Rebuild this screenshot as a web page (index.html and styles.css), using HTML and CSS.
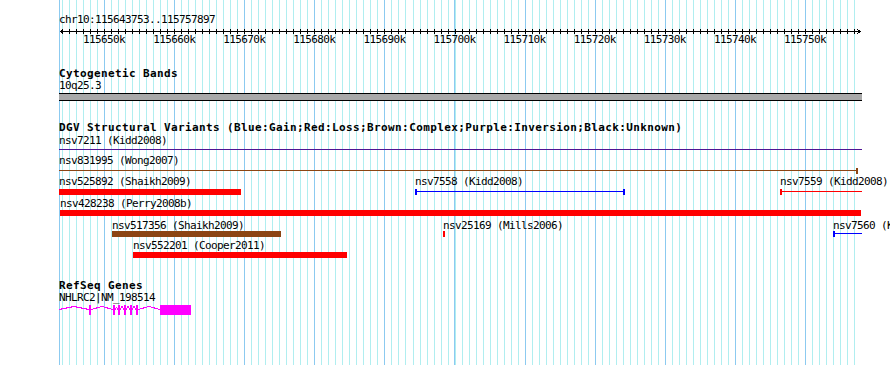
FILE: index.html
```html
<!DOCTYPE html>
<html lang="en">
<head>
    <meta charset="UTF-8">
    <title>chr10:115643753..115757897</title>
    <link rel="stylesheet" href="styles.css">
</head>
<body>
    <div class="page">
        <div class="gutter"></div>

        <div class="panel">
            <!-- ruler -->
            <div class="ruler">
                <div class="txt">chr10:115643753..115757897</div>
                <svg class="axis" width="803" height="8">
                    <line x1="1" y1="5.5" x2="801" y2="5.5" />
                    <path d="M4.5 3.5 L1.5 5.5 L4.5 7.5" />
                    <path d="M798.5 3.5 L801.5 5.5 L798.5 7.5" />
                </svg>
                <div class="ticks">
                    <span>115650k</span><span>115660k</span><span>115670k</span><span>115680k</span>
                    <span>115690k</span><span>115700k</span><span>115710k</span><span>115720k</span>
                    <span>115730k</span><span>115740k</span><span>115750k</span>
                </div>
            </div>

            <!-- cytoband -->
            <div class="track cyto">
                <div class="title">Cytogenetic Bands</div>
                <div class="txt">10q25.3</div>
                <div class="band"></div>
            </div>

            <!-- DGV -->
            <div class="track dgv">
                <div class="title">DGV Structural Variants (Blue:Gain;Red:Loss;Brown:Complex;Purple:Inversion;Black:Unknown)</div>

                <div class="row r1">
                    <div class="feature" style="left:0;width:803px">
                        <div class="label">nsv7211 (Kidd2008)</div>
                        <div class="glyph seg purple"></div>
                    </div>
                </div>

                <div class="row r2">
                    <div class="feature" style="left:0;width:799px">
                        <div class="label">nsv831995 (Wong2007)</div>
                        <div class="glyph seg brown cap-r"></div>
                    </div>
                </div>

                <div class="row r3">
                    <div class="feature" style="left:0;width:182px">
                        <div class="label">nsv525892 (Shaikh2009)</div>
                        <div class="glyph bar red"></div>
                    </div>
                    <div class="feature" style="left:356px;width:210px">
                        <div class="label">nsv7558 (Kidd2008)</div>
                        <div class="glyph seg blue cap-l cap-r"></div>
                    </div>
                    <div class="feature" style="left:721px;width:82px">
                        <div class="label">nsv7559 (Kidd2008)</div>
                        <div class="glyph seg red cap-l"></div>
                    </div>
                </div>

                <div class="row r4">
                    <div class="feature" style="left:1px;width:801px">
                        <div class="label">nsv428238 (Perry2008b)</div>
                        <div class="glyph bar red"></div>
                    </div>
                </div>

                <div class="row r5">
                    <div class="feature" style="left:53px;width:169px">
                        <div class="label">nsv517356 (Shaikh2009)</div>
                        <div class="glyph bar brown"></div>
                    </div>
                    <div class="feature" style="left:384px;width:2px">
                        <div class="label">nsv25169 (Mills2006)</div>
                        <div class="glyph bar red"></div>
                    </div>
                    <div class="feature" style="left:774px;width:29px">
                        <div class="label">nsv7560 (Kidd2008)</div>
                        <div class="glyph seg blue cap-l"></div>
                    </div>
                </div>

                <div class="row r6">
                    <div class="feature" style="left:74px;width:214px">
                        <div class="label">nsv552201 (Cooper2011)</div>
                        <div class="glyph bar red"></div>
                    </div>
                </div>
            </div>

            <!-- RefSeq -->
            <div class="track genes">
                <div class="title">RefSeq Genes</div>
                <div class="row r7">
                    <div class="feature" style="left:0;width:132px">
                        <div class="label">NHLRC2|NM_198514</div>
                        <svg class="gene" width="132" height="10">
                            <polyline points="0,4.5 15,1.5 30,4.5" />
                            <polyline points="32,4.5 43,1.5 54,4.5" />
                            <polyline points="56,4.5 57.5,2.5 59,4.5" />
                            <polyline points="61,4.5 63,1.5 65,4.5" />
                            <polyline points="67,4.5 69,1.5 71,4.5" />
                            <polyline points="73,4.5 75,1.5 77,4.5" />
                            <polyline points="79,4.5 90,1.5 101,4.5" />
                            <rect x="30" y="0" width="2" height="10" />
                            <rect x="54" y="0" width="2" height="10" />
                            <rect x="59" y="0" width="2" height="10" />
                            <rect x="65" y="0" width="2" height="10" />
                            <rect x="71" y="0" width="2" height="10" />
                            <rect x="77" y="0" width="2" height="10" />
                            <rect x="101" y="0" width="31" height="10" />
                        </svg>
                    </div>
                </div>
            </div>
        </div>
    </div>
</body>
</html>
```

FILE: styles.css
```css
body {
    margin: 0;
    padding: 0;
    background: #fff;
    overflow: hidden;
    color: #000;
}

.page {
    display: flex;
    height: 100vh;
}

.gutter {
    width: 59px;
    flex: none;
}

/* track panel with the grid drawn behind it */
.panel {
    width: 803px;
    flex: none;
    font: 11px/12px "DejaVu Sans Mono", monospace;
    letter-spacing: -0.62px;
    white-space: nowrap;
    background:
        linear-gradient(#8ccaf0, #8ccaf0) 0 0 / 1px 100% no-repeat,
        repeating-linear-gradient(to right, #8ccaf0 0 1px, transparent 1px 70.1px) 45px 0 / 748px 100% no-repeat,
        repeating-linear-gradient(to right, #b0eef0 0 1px, transparent 1px 7.01px) 3px 0 / 793px 100% no-repeat;
}

.title {
    font-weight: bold;
    letter-spacing: 0.38px;
}

/* ruler */
.ruler {
    padding-top: 14px;
}

.axis {
    display: block;
    shape-rendering: crispEdges;
    background: repeating-linear-gradient(to right, #000 0 1px, transparent 1px 7.01px) 3px 3px / 793px 5px no-repeat;
}

.axis line,
.axis path {
    stroke: #000;
    stroke-width: 1;
    fill: none;
}

.ticks {
    display: flex;
    padding-left: 10px;
}

.ticks span {
    flex: none;
    width: 70.1px;
    text-align: center;
}

/* tracks */
.cyto {
    margin-top: 22px;
}

.band {
    margin-top: 1px;
    height: 6px;
    border-top: 1px solid #000;
    border-bottom: 1px solid #000;
    background: #a9a9a9;
}

.dgv {
    margin-top: 21px;
}

.dgv .title {
    margin-bottom: 1px;
}

.row {
    position: relative;
}

.r1 { height: 20px; }
.r2 { height: 21px; }
.r3 { height: 22px; }
.r4 { height: 22px; }
.r5 { height: 20px; }
.r6 { height: 18px; }
.r7 { height: 23px; }

.feature {
    position: absolute;
    top: 0;
}

.label {
    height: 12px;
}

.glyph {
    height: 6px;
    box-sizing: border-box;
}

.r2 .glyph,
.r3 .glyph {
    margin-top: 1px;
}

.r5 .glyph {
    margin-top: -1px;
}

.bar {
    background: currentColor;
}

.seg {
    background: linear-gradient(currentColor, currentColor) 0 2px / 100% 1px no-repeat;
}

.seg.cap-l {
    border-left: 2px solid currentColor;
}

.seg.cap-r {
    border-right: 2px solid currentColor;
}

.red { color: #ff0000; }
.blue { color: #0000ff; }
.brown { color: #8b4513; }
.purple { color: #4f1494; }

.genes {
    margin-top: 22px;
}

.gene {
    display: block;
    margin-top: 1px;
    shape-rendering: crispEdges;
}

.gene polyline {
    stroke: #ff00ff;
    stroke-width: 1;
    fill: none;
}

.gene rect {
    fill: #ff00ff;
}
```
